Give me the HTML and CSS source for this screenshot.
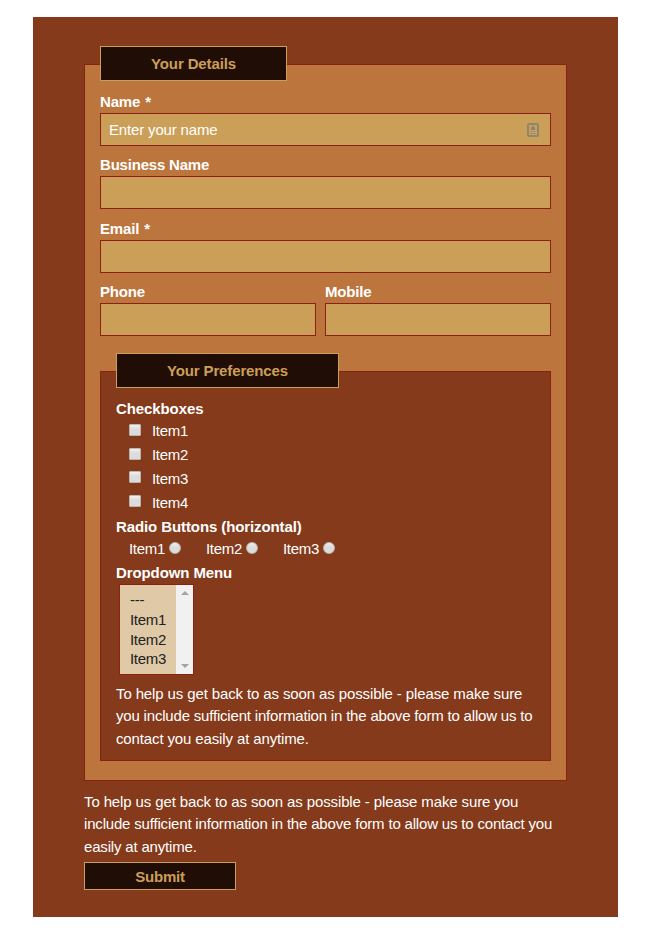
FILE: index.html
```html
<!DOCTYPE html>
<html lang="en">
<head>
<meta charset="utf-8">
<title>Contact form</title>
<link rel="stylesheet" href="styles.css">
</head>
<body>
<form class="panel">
  <section class="group">
    <h2 class="legend details">Your Details</h2>
    <div class="field">
      <label class="required" for="name">Name *</label>
      <div class="control">
        <input id="name" type="text" placeholder="Enter your name">
        <svg class="autofill" width="12" height="14" viewBox="0 0 12 14"><rect x="1" y="1" width="10" height="12" rx="1" fill="none" stroke="#8f8672" stroke-width="2"/><path d="M6 2.5 L7.8 5 V7 H4.2 V5Z" fill="#858078"/><path d="M3.5 8.5H8.5M3 10.5H9" stroke="#a08f68"/></svg>
      </div>
    </div>
    <div class="field"><label for="biz">Business Name</label><input id="biz" type="text"></div>
    <div class="field"><label class="required" for="email">Email *</label><input id="email" type="text"></div>
    <div class="pair">
      <div class="field"><label for="phone">Phone</label><input id="phone" type="text"></div>
      <div class="field"><label for="mobile">Mobile</label><input id="mobile" type="text"></div>
    </div>
    <section class="group inner">
      <h2 class="legend preferences">Your Preferences</h2>
      <h3 class="title">Checkboxes</h3>
      <div class="checks">
        <label class="check"><input type="checkbox">Item1</label>
        <label class="check"><input type="checkbox">Item2</label>
        <label class="check"><input type="checkbox">Item3</label>
        <label class="check"><input type="checkbox">Item4</label>
      </div>
      <h3 class="title">Radio Buttons (horizontal)</h3>
      <div class="radios">
        <label class="radio">Item1<input type="radio" name="r"></label>
        <label class="radio">Item2<input type="radio" name="r"></label>
        <label class="radio">Item3<input type="radio" name="r"></label>
      </div>
      <h3 class="title">Dropdown Menu</h3>
      <div class="listbox">
        <ul class="options"><li>---</li><li>Item1</li><li>Item2</li><li>Item3</li></ul>
        <div class="scrollbar">
          <svg width="8" height="4" viewBox="0 0 8 4"><path d="M0 4L4 0L8 4Z" fill="#a3a3a3"/></svg>
          <svg width="8" height="4" viewBox="0 0 8 4"><path d="M0 0L4 4L8 0Z" fill="#a3a3a3"/></svg>
        </div>
      </div>
      <p class="note"><span class="lead">To help us get back to as soon as possible - please make sure</span><br>you include sufficient information in the above form to allow us to<br><span class="tail">contact you easily at anytime.</span></p>
    </section>
  </section>
  <p class="note outer"><span class="lead">To help us get back to as soon as possible - please make sure you</span><br>include sufficient information in the above form to allow us to contact you<br>easily at anytime.</p>
  <button class="submit" type="button">Submit</button>
</form>
</body>
</html>
```
FILE: styles.css
```css
* { box-sizing: border-box; }
body {
  margin: 0;
  padding: 17px 32px 0 33px;
  background: #fff;
  color: #fff;
  font: 15px/22.75px "Liberation Sans", Arial, sans-serif;
}
.panel {
  height: 900px;
  padding: 47px 51px 0;
  background: #843a1b;
}
.group {
  height: 717px;
  padding: 0 15px;
  width: 483px;
  border: 1px solid #8c2113;
  background: #bb753d;
}
.legend {
  height: 35px;
  margin: -19px 0 9px;
  border: 1px solid #cb9f58;
  background: #200d06;
  color: #cb9f58;
  font-size: 15px;
  line-height: 33px;
  letter-spacing: -0.13px;
  text-align: center;
}
.details { width: 187px; }
.preferences { width: 223px; }
.field { height: 63.4px; font-weight: bold; letter-spacing: -0.2px; }
.field label { display: block; height: 23px; line-height: 23px; }
.field .required { letter-spacing: -0.15px; word-spacing: 1px; }
.control { position: relative; }
.field input {
  display: block;
  width: 100%;
  height: 33px;
  margin: 0;
  padding: 0 8px;
  border: 1px solid #8c2113;
  border-radius: 0;
  background: #cb9f58;
  color: #fff;
  font: 15px "Liberation Sans", Arial, sans-serif;
  letter-spacing: -0.16px;
}
.field input::placeholder { color: #fff; opacity: 1; }
.autofill { position: absolute; right: 12px; top: 10px; }
.pair { display: grid; grid-template-columns: 216px 226px; gap: 9px; height: 53.8px; }
.inner {
  width: 451px;
  height: 390px;
  margin-top: 37px;
  background: #843a1b;
}
.title { margin: 0; height: 23px; font-size: 15px; line-height: 23px; letter-spacing: -0.1px; }
.checks { padding-left: 13px; }
.check { display: flex; align-items: center; height: 23.7px; letter-spacing: -0.3px; }
.check input, .radio input {
  appearance: none;
  width: 12px;
  height: 12px;
  margin: 0;
  border: 1px solid #b9b5b2;
  background: linear-gradient(#f0f0f0, #dcdcdc 40%);
}
.check input { margin: -4px 11px 0 0; border-radius: 1px; }
.radios { display: flex; height: 23px; padding-left: 13px; }
.radio { display: flex; align-items: center; width: 77px; letter-spacing: -0.3px; }
.radio input { margin: -3px 0 0 4px; border-radius: 50%; }
.listbox {
  display: flex;
  width: 75px;
  height: 91px;
  margin: 0 0 8px 3px;
  border: 1px solid #8c2113;
  background: #dfc9a6;
  color: #222;
}
.options { flex: 1; margin: 0; padding: 5px 0 0 10px; list-style: none; line-height: 19.9px; letter-spacing: -0.3px; }
.scrollbar {
  display: flex;
  flex-direction: column;
  justify-content: space-between;
  align-items: center;
  width: 17px;
  padding: 6px 0;
  background: #f1f1f1;
}
.note { margin: 0; white-space: nowrap; letter-spacing: -0.18px; }
.inner .note { letter-spacing: -0.19px; }
.note .lead { letter-spacing: -0.12px; }
.note .tail { letter-spacing: -0.13px; }
.outer { margin-top: 9.5px; }
.submit {
  display: block;
  width: 152px;
  height: 28px;
  margin: 3.5px 0 0;
  padding: 0;
  border: 1px solid #cb9f58;
  background: #200d06;
  color: #cb9f58;
  font: bold 15px "Liberation Sans", Arial, sans-serif;
  letter-spacing: -0.2px;
}
```
